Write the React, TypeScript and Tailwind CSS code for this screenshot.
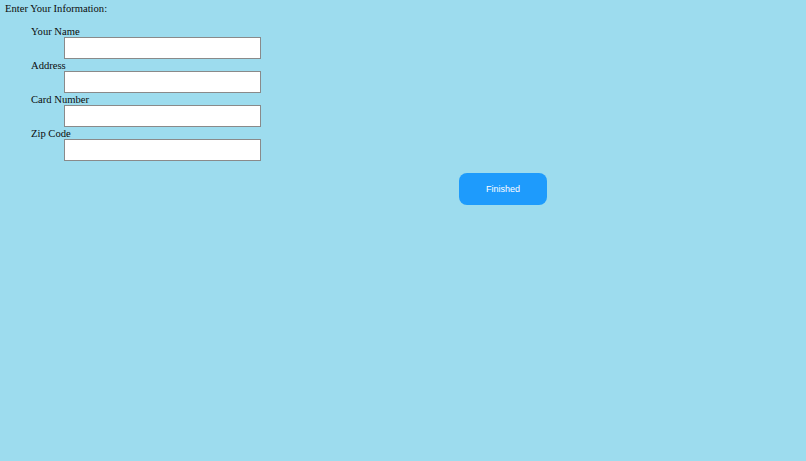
export default function App() {
  const fields = ['Your Name', 'Address', 'Card Number', 'Zip Code']

  return (
    <div className="min-h-screen bg-[#9ddcee] pt-[3px] pl-[5px] font-['Liberation_Serif',serif] text-[10.6px] text-[#0c0c0c]">
      <div className="leading-[12px]">Enter Your Information:</div>

      {/* Form fields */}
      <div className="mt-[10px] pl-[26px]">
        {fields.map((label) => (
          <div key={label}>
            <div className="h-[12px] pt-[1px] leading-[12px]">{label}</div>
            <input
              type="text"
              className="ml-[33px] block h-[22px] w-[197px] border border-[#8a8a8a] bg-white outline-none"
            />
          </div>
        ))}
      </div>

      <div className="mt-[12px] flex">
        <button className="ml-[454px] h-[32px] w-[88px] rounded-[8px] bg-[#1e9bfc] pt-[1px] font-['Liberation_Sans',sans-serif] text-[9px] text-white">
          Finished
        </button>
      </div>
    </div>
  )
}
